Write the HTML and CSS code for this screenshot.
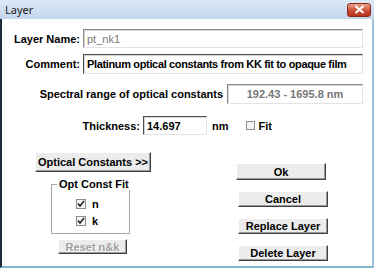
FILE: index.html
```html
<!DOCTYPE html>
<html lang="en-US">
  <head>
    <meta charset="UTF-8" />
    <title>Layer</title>
    <link rel="stylesheet" href="styles.css">
  </head>
  <body>
    <div class="window">
      <div class="titlebar">
        <span class="title">Layer</span>
        <span class="close">
          <svg width="11" height="9" viewBox="0 0 11 9">
            <path d="M1.5 1 L9.5 8 M9.5 1 L1.5 8" stroke="#fff" stroke-width="2.2" />
          </svg>
        </span>
      </div>
      <div class="client">
        <div class="row row-name">
          <label class="lbl">Layer Name:</label>
          <div class="field field-wide dim">pt_nk1</div>
        </div>
        <div class="row row-comment">
          <label class="lbl">Comment:</label>
          <div class="field field-wide tight">Platinum optical constants from KK fit to opaque film</div>
        </div>
        <div class="row row-range">
          <label class="lbl">Spectral range of optical constants</label>
          <div class="field field-range">192.43 - 1695.8 nm</div>
        </div>
        <div class="row row-thick">
          <label class="lbl">Thickness:</label>
          <div class="field field-thick">14.697</div>
          <span class="unit">nm</span>
          <span class="check empty"></span>
          <span class="fit">Fit</span>
        </div>
        <div class="bottom">
          <div class="left-col">
            <button class="btn btn-optical">Optical Constants &gt;&gt;</button>
            <div class="group">
              <div class="group-title">Opt Const Fit</div>
              <div class="opt">
                <span class="check">
                  <svg width="8" height="8" viewBox="0 0 8 8"><path d="M1 3.5 L3 6 L7 1" fill="none" stroke="#222" stroke-width="1.6" /></svg>
                </span>
                <span>n</span>
              </div>
              <div class="opt">
                <span class="check">
                  <svg width="8" height="8" viewBox="0 0 8 8"><path d="M1 3.5 L3 6 L7 1" fill="none" stroke="#222" stroke-width="1.6" /></svg>
                </span>
                <span>k</span>
              </div>
            </div>
            <button class="btn btn-reset" disabled>Reset n&amp;k</button>
          </div>
          <div class="right-col">
            <button class="btn btn-ok">Ok</button>
            <button class="btn">Cancel</button>
            <button class="btn">Replace Layer</button>
            <button class="btn">Delete Layer</button>
          </div>
        </div>
      </div>
    </div>
  </body>
</html>
```

FILE: styles.css
```css
body {
  margin: 0;
  width: 377px;
  height: 269px;
  overflow: hidden;
  background: #fff;
  font-family: "Liberation Sans", Arial, sans-serif;
  font-size: 11px;
  font-weight: bold;
  color: #000;
}

.window {
  width: 374px;
  height: 268px;
  box-sizing: border-box;
  border-left: 2px solid #1d2b3c;
  border-right: 2px solid #9fc0de;
  border-bottom: 2px solid #7fb8cc;
  display: flex;
  flex-direction: column;
}

.titlebar {
  height: 19px;
  margin-left: -2px;
  margin-right: -2px;
  background: linear-gradient(#dce8f6, #c3d6ec);
  display: flex;
  align-items: center;
  justify-content: space-between;
  padding: 0 3px 0 5px;
}

.title {
  font-family: "Noto Sans", sans-serif;
  font-weight: normal;
  font-size: 11px;
  color: #1b1b1b;
}

.close {
  width: 24px;
  height: 14px;
  box-sizing: border-box;
  border: 1px solid #8a2a1a;
  border-radius: 3px;
  background: linear-gradient(#eaa28c, #d0553c 50%, #b8301c);
  display: flex;
  align-items: center;
  justify-content: center;
}

.client {
  flex: 1;
  padding-top: 10px;
  background: #fff;
}

.row {
  display: flex;
  align-items: center;
}

.lbl {
  text-align: right;
  padding-right: 3px;
  box-sizing: border-box;
}

.field {
  box-sizing: border-box;
  height: 19px;
  border: 1px solid;
  border-color: #8c8c8c #e4e4e4 #e4e4e4 #8c8c8c;
  box-shadow: inset 1px 1px 0 #d4d4d4;
  padding: 0 3px;
  display: flex;
  align-items: center;
  white-space: nowrap;
  overflow: hidden;
}

.dim {
  color: #7a7a7a;
  font-weight: normal;
}

.tight {
  letter-spacing: -0.35px;
}

.row-name .lbl,
.row-comment .lbl {
  width: 81px;
}

.field-wide {
  width: 280px;
}

.row-comment {
  margin-top: 6px;
}

.row-comment .field {
  height: 20px;
  border-color: #505050 #e4e4e4 #e4e4e4 #505050;
}

.row-range {
  margin-top: 10px;
}

.row-range .lbl {
  width: 225px;
  padding-right: 4px;
}

.field-range {
  width: 136px;
  height: 20px;
  justify-content: center;
  color: #777;
}

.row-thick {
  margin-top: 12px;
}

.row-thick .lbl {
  width: 141px;
}

.field-thick {
  width: 64px;
  border-color: #505050 #e4e4e4 #e4e4e4 #505050;
}

.unit {
  margin-left: 5px;
}

.check {
  width: 10px;
  height: 10px;
  box-sizing: border-box;
  border: 1px solid #8c8c8c;
  background: #f4f4f4;
  display: inline-flex;
  align-items: center;
  justify-content: center;
}

.check.empty {
  margin-left: 17px;
  width: 9px;
  height: 9px;
}

.fit {
  margin-left: 4px;
}

.bottom {
  margin-top: 17px;
  display: flex;
}

.left-col {
  width: 203px;
  padding-left: 33px;
  display: flex;
  flex-direction: column;
  align-items: flex-start;
}

.btn {
  font-family: inherit;
  font-size: 11px;
  font-weight: bold;
  color: #000;
  background: #ececec;
  box-sizing: border-box;
  height: 16px;
  width: 90px;
  padding: 0;
  border: 1px solid;
  border-color: #fff #404040 #404040 #fff;
  box-shadow: inset -1px -1px 0 #9a9a9a;
  line-height: 12px;
}

.btn-optical {
  width: 116px;
  height: 20px;
}

.group {
  margin: 12px 0 0 16px;
  padding-left: 24px;
  width: 79px;
  height: 50px;
  box-sizing: border-box;
  border: 1px solid #a8a8a8;
}

.group-title {
  width: fit-content;
  margin: -7px 0 0 -19px;
  padding: 0 2px;
  background: #fff;
  line-height: 12px;
  white-space: nowrap;
}

.opt {
  display: flex;
  align-items: center;
  gap: 6px;
  height: 10px;
  margin-top: 7px;
}

.group-title + .opt {
  margin-top: 9px;
}

.btn-reset {
  margin: 5px 0 0 23px;
  width: 69px;
  height: 15px;
  color: #a0a0a0;
  text-shadow: 1px 1px 0 #fff;
}

.right-col {
  padding-top: 11px;
  display: flex;
  flex-direction: column;
  align-items: flex-start;
  gap: 11px;
}

.btn-ok {
  height: 17px;
  margin-left: -2px;
}
```
